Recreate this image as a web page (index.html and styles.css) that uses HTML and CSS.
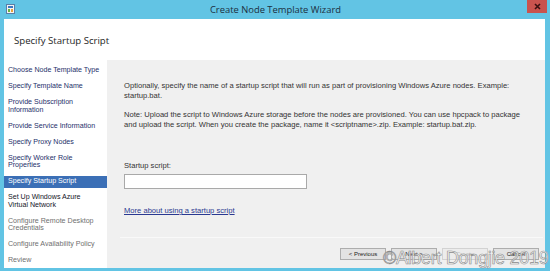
FILE: index.html
```html
<!DOCTYPE html>
<html lang="en">
<head>
    <meta charset="UTF-8">
    <title>Create Node Template Wizard</title>
    <link rel="stylesheet" href="styles.css">
</head>
<body>
    <div class="window">
        <div class="titlebar">
            <svg class="app-icon" width="9" height="10" viewBox="0 0 9 10">
                <rect x="0.5" y="0.5" width="8" height="9" fill="#f4f4f4" stroke="#5a7fa8"/>
                <rect x="2" y="2" width="5" height="2" fill="#3a78c2"/>
                <rect x="2" y="5" width="2" height="3" fill="#6cb33f"/>
                <rect x="5" y="5" width="2" height="3" fill="#e8a23a"/>
            </svg>
            <span class="title">Create Node Template Wizard</span>
            <div class="close-btn">
                <svg width="7" height="7" viewBox="0 0 7 7">
                    <path d="M1 1 L6 6 M6 1 L1 6" stroke="#3a1010" stroke-width="1.6"/>
                </svg>
            </div>
        </div>

        <div class="wizard">
            <div class="page-header">Specify Startup Script</div>
            <div class="wizard-main">
                <ul class="steps">
                    <li class="done">Choose Node Template Type</li>
                    <li class="done">Specify Template Name</li>
                    <li class="done">Provide Subscription Information</li>
                    <li class="done">Provide Service Information</li>
                    <li class="done">Specify Proxy Nodes</li>
                    <li class="done">Specify Worker Role Properties</li>
                    <li class="active">Specify Startup Script</li>
                    <li class="next">Set Up Windows Azure Virtual Network</li>
                    <li class="todo">Configure Remote Desktop Credentials</li>
                    <li class="todo">Configure Availability Policy</li>
                    <li class="todo">Review</li>
                </ul>

                <div class="content">
                    <div class="content-body">
                        <p>Optionally, specify the name of a startup script that will run as part of provisioning Windows Azure nodes. Example: startup.bat.</p>
                        <p>Note: Upload the script to Windows Azure storage before the nodes are provisioned. You can use hpcpack to package and upload the script. When you create the package, name it &lt;scriptname&gt;.zip. Example: startup.bat.zip.</p>
                        <label for="startup-script" class="field-label">Startup script:</label>
                        <input type="text" id="startup-script" class="field-input">
                        <a href="#" class="help-link">More about using a startup script</a>
                    </div>
                    <div class="footer">
                        <button class="btn">&lt; Previous</button>
                        <button class="btn">Next &gt;</button>
                        <button class="btn" disabled>Create</button>
                        <button class="btn">Cancel</button>
                    </div>
                </div>
            </div>
        </div>
    </div>

    <div class="watermark">©Albert Dongjie 2019</div>
</body>
</html>
```

FILE: styles.css
```css
* {
    box-sizing: border-box;
}
body {
    margin: 0;
    font-family: 'Liberation Sans', Arial, sans-serif;
    overflow: hidden;
}

.window {
    width: 550px; height: 271px; background: #62c4e4;
    padding: 0 5px 3px 4px; display: flex; flex-direction: column;
}

.titlebar {
    height: 19px; flex-shrink: 0; position: relative; display: flex;
    align-items: center; justify-content: center;
}
.app-icon { position: absolute; left: 2px; top: 4px; }
.title {
    font-family: 'Open Sans', sans-serif; font-size: 9.4px; color: #1c2f3f;
    margin-left: 2px;
}
.close-btn {
    position: absolute; right: -2px; top: 0; width: 20px; height: 13px;
    background: #c9534e; display: flex; align-items: center; justify-content: center;
}

.wizard {
    flex: 1; min-height: 0; display: flex; flex-direction: column; background: #fff;
}

.page-header {
    height: 41px; flex-shrink: 0; padding-left: 10px; display: flex; align-items: center;
    font-family: 'Open Sans', sans-serif; font-size: 9.6px; color: #1e1e1e;
    padding-top: 1px;
}

.wizard-main { flex: 1; min-height: 0; display: flex; overflow: hidden; }

.steps {
    list-style: none; margin: 0; padding: 5px 0 0 0; width: 103px; flex-shrink: 0;
    background: #fff; font-size: 7.1px;
}
.steps li {
    line-height: 7.5px; padding: 2px 5px 2px 4px; margin-bottom: 4.5px;
}
.steps .done { color: #25306a; }
.steps .next { color: #15151f; }
.steps .todo { color: #6f6f6f; }
.steps .active { background: #3b6fb6; color: #fff; }

.content {
    flex: 1; background: #f0f0f0; display: flex; flex-direction: column;
}
.content-body {
    flex: 1; padding: 21px 14px 0 17px; font-size: 7.6px; color: #333;
    display: flex; flex-direction: column; align-items: flex-start;
}
.content-body p { margin: 0 0 9px 0; line-height: 10px; }

.field-label { margin-top: 22px; line-height: 10px; }
.field-input {
    margin-top: 3px; width: 183px; height: 15px; border: 1px solid #a9a9a9;
    background: #fff; padding: 0;
}
.help-link {
    margin-top: 17px; line-height: 10px; color: #2a3991;
}

.footer {
    flex-shrink: 0; margin: 0 2px 0 13px; border-top: 1px solid #f9f9f9;
    padding: 10px 4px 8px 0; display: flex; justify-content: flex-end; gap: 5px;
}
.btn {
    width: 46px; height: 12px; padding: 0; font-family: 'Liberation Sans', sans-serif;
    font-size: 6px; color: #222; background: #e3e3e3; border: 1px solid #adadad;
}
.btn:disabled { color: #bcbcbc; background: #ececec; border-color: #d2d2d2; }

.watermark {
    position: absolute; left: 383px; top: 248px; font-size: 18px;
    font-family: 'Liberation Sans', sans-serif; color: rgba(255, 255, 255, 0.75);
    -webkit-text-stroke: 0.6px #8a8a8a; white-space: nowrap; letter-spacing: -0.3px;
}
```
